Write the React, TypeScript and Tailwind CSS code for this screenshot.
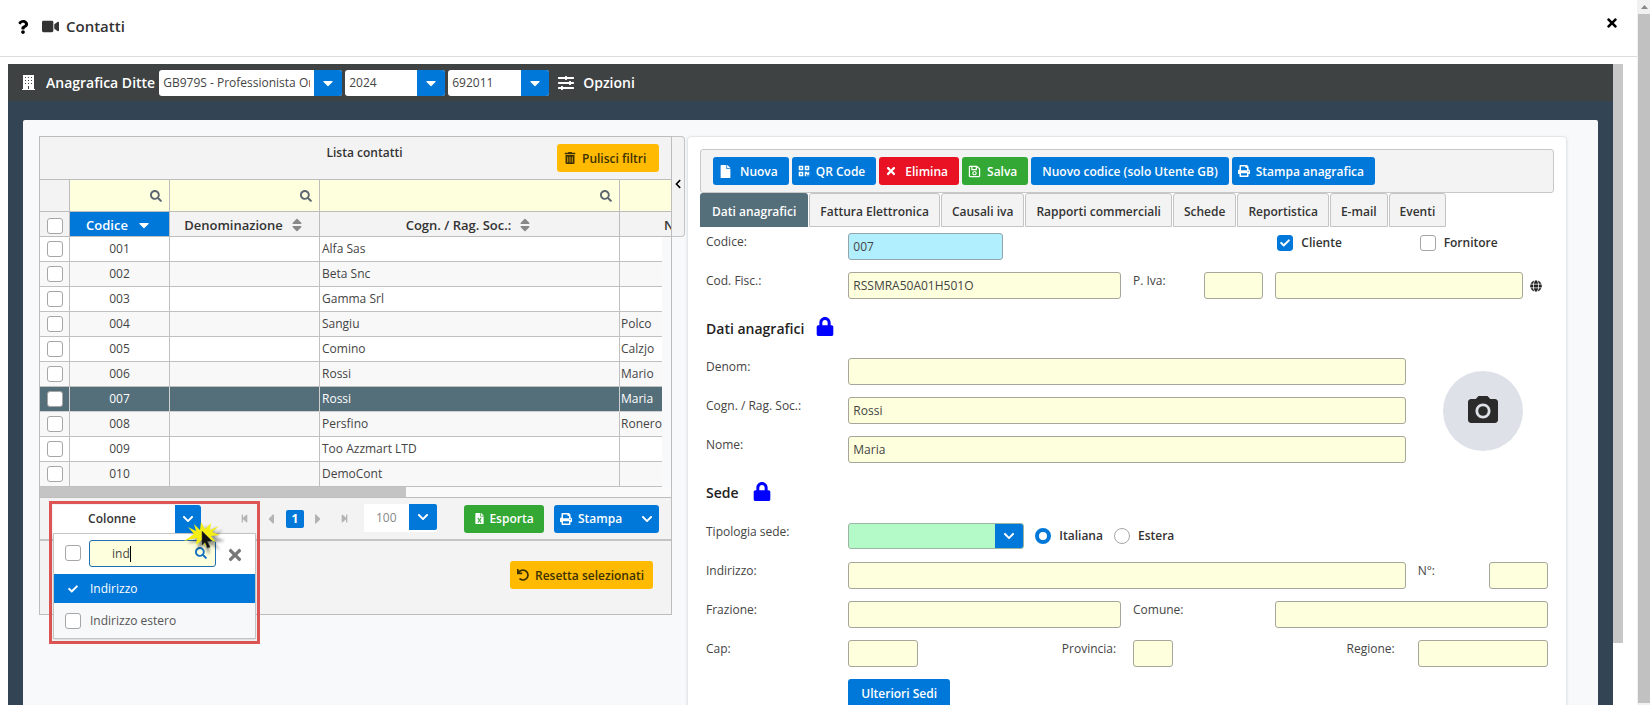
import React from "react";
import {
  FaCaretDown,
  FaCaretLeft,
  FaCaretRight,
  FaCheck,
  FaChevronDown,
  FaChevronLeft,
  FaFile,
  FaFileExcel,
  FaGlobe,
  FaLock,
  FaPrint,
  FaQrcode,
  FaQuestion,
  FaRegSave,
  FaSearch,
  FaSlidersH,
  FaSort,
  FaStepBackward,
  FaStepForward,
  FaTimes,
  FaTrashAlt,
  FaUndo,
  FaVideo,
} from "react-icons/fa";
import { MdCameraAlt } from "react-icons/md";

type Contact = { code: string; surname: string; name: string };

const contacts: Contact[] = [
  { code: "001", surname: "Alfa Sas", name: "" },
  { code: "002", surname: "Beta Snc", name: "" },
  { code: "003", surname: "Gamma Srl", name: "" },
  { code: "004", surname: "Sangiu", name: "Polco" },
  { code: "005", surname: "Comino", name: "Calzjo" },
  { code: "006", surname: "Rossi", name: "Mario" },
  { code: "007", surname: "Rossi", name: "Maria" },
  { code: "008", surname: "Persfino", name: "Ronero" },
  { code: "009", surname: "Too Azzmart LTD", name: "" },
  { code: "010", surname: "DemoCont", name: "" },
];

const selectedCode = "007";

const tabs = [
  "Dati anagrafici",
  "Fattura Elettronica",
  "Causali iva",
  "Rapporti commerciali",
  "Schede",
  "Reportistica",
  "E-mail",
  "Eventi",
];

function BuildingIcon() {
  return (
    <svg width="13" height="15" viewBox="0 0 13 15" fill="currentColor" aria-hidden="true">
      <path
        fillRule="evenodd"
        d="M1 0H12V14H13V15H0V14H1ZM3 2V3H4V2ZM6 2V3H7V2ZM9 2V3H10V2ZM3 5V6H4V5ZM6 5V6H7V5ZM9 5V6H10V5ZM3 8V9H4V8ZM6 8V9H7V8ZM9 8V9H10V8ZM6 11V14H7V11Z"
      />
    </svg>
  );
}

function CheckBox({ label, checked = false, className = "" }: { label: string; checked?: boolean; className?: string }) {
  return (
    <span className={`relative inline-flex size-4 shrink-0 ${className}`}>
      <input
        type="checkbox"
        aria-label={label}
        defaultChecked={checked}
        className="peer size-4 appearance-none rounded-[3px] border border-[#a6a6a6] bg-white checked:border-[#0078d9] checked:bg-[#0078d9]"
      />
      <FaCheck className="pointer-events-none absolute left-[3px] top-[3px] hidden size-[10px] text-white peer-checked:block" />
    </span>
  );
}

function TopSelect({ label, value, className }: { label: string; value: string; className: string }) {
  return (
    <div className={`relative h-[26px] overflow-hidden rounded-[3px] bg-white ${className}`}>
      <select
        aria-label={label}
        className="h-full w-full appearance-none bg-transparent pl-1 pr-8 text-xs text-[#444]"
      >
        <option>{value}</option>
      </select>
      <span className="pointer-events-none absolute inset-y-0 right-0 flex w-7 items-center justify-center bg-[#0078d9] text-white">
        <FaCaretDown className="size-4" />
      </span>
    </div>
  );
}

function ActionButton({
  children,
  icon,
  className,
}: {
  children: React.ReactNode;
  icon?: React.ReactNode;
  className: string;
}) {
  return (
    <button type="button" className={`flex h-7 items-center whitespace-nowrap rounded-[3px] text-xs font-semibold ${className}`}>
      {icon}
      <span className="pt-px">{children}</span>
    </button>
  );
}

function FieldLabel({ children, htmlFor, className = "" }: { children: React.ReactNode; htmlFor: string; className?: string }) {
  return (
    <label htmlFor={htmlFor} className={`whitespace-nowrap text-xs leading-[18px] text-[#444] ${className}`}>
      {children}
    </label>
  );
}

function TextField({ id, value = "", className = "", label }: { id: string; value?: string; className?: string; label?: string }) {
  return (
    <input
      id={id}
      type="text"
      aria-label={label}
      defaultValue={value}
      className={`h-[27px] min-w-0 rounded-[3px] border border-[#a6a69a] bg-[#feffdd] px-1 text-xs text-[#444] ${className}`}
    />
  );
}

function SectionTitle({ children, className }: { children: React.ReactNode; className: string }) {
  return (
    <div className={`flex items-center ${className}`}>
      <h2 className="text-sm font-semibold text-[#222]">{children}</h2>
      <FaLock className="mb-1 h-[19px] w-[18px] text-[#0000ff]" />
    </div>
  );
}

function ColumnMenu() {
  return (
    <div className="absolute left-[9px] top-[3px] z-10 w-[211px] border-[3px] border-[#dd5454] pb-[2px] pt-px">
      <div className="ml-px flex h-7 w-[148px]">
        <button type="button" aria-expanded="true" className="flex flex-1 bg-white text-xs font-semibold text-[#333]">
          <span className="flex h-full flex-1 items-center justify-center pr-1">Colonne</span>
          <span className="flex h-full w-[26px] items-center justify-center rounded-tr-[3px] bg-[#0078d9] text-white">
            <FaChevronDown className="size-3" />
          </span>
        </button>
      </div>
      <div className="mx-px border border-[#c4c4c4] bg-[#f6f8fa] pb-[3px] shadow">
        <div className="flex h-10 items-center bg-white pb-[2px] pl-[11px]">
          <CheckBox label="Seleziona tutte le colonne" />
          <div className="relative ml-2 w-[127px]">
            <input
              type="text"
              aria-label="Filtra colonne"
              defaultValue="ind"
              className="h-[27px] w-full rounded-[3px] border border-[#1f6fb5] bg-[#feffdd] pl-[22px] text-xs text-[#444]"
            />
            <span className="absolute left-[41px] top-[6px] h-4 w-px bg-black" />
            <FaSearch className="absolute right-[9px] top-[7px] size-3 text-[#1672c0]" />
          </div>
          <button type="button" aria-label="Chiudi" className="ml-[10px] mt-1 text-[#777]">
            <FaTimes className="size-[18px]" />
          </button>
        </div>
        <label className="flex h-[29px] items-center gap-[9px] bg-[#0078d9] pl-[11px] text-xs text-white">
          <CheckBox label="Indirizzo" checked />
          Indirizzo
        </label>
        <label className="mt-[3px] flex h-[29px] items-center gap-[9px] pl-[11px] text-xs text-[#555]">
          <CheckBox label="Indirizzo estero" />
          Indirizzo estero
        </label>
      </div>
      <svg className="pointer-events-none absolute left-[131px] top-[18px]" width="42" height="40" viewBox="0 0 42 40" aria-hidden="true">
        <defs>
          <filter id="soft" x="-20%" y="-20%" width="150%" height="150%">
            <feGaussianBlur stdDeviation="1.4" />
          </filter>
        </defs>
        <path
          d="M4 5L14 9L13 3L18 8L21 0L23 8L31 2L28 9L38 5L30 12L40 16L29 17L35 25L25 19L24 30L19 20L12 25L14 17L2 18L12 13Z"
          fill="#00000066"
          filter="url(#soft)"
          transform="translate(2 3)"
        />
        <path
          d="M5 5L13 9L11 2L17 8L18 0L22 7L28 1L27 8L36 4L29 10L37 13L28 14L33 20L25 17L23 25L19 18L13 23L14 16L1 19L11 12Z"
          fill="#f4ee12"
        />
        <path d="M19 9V23L22 20.500L24.500 26L27 25L24.500 19.500L29 19Z" fill="#111" stroke="#444" strokeWidth="0.500" />
      </svg>
    </div>
  );
}

function ContactList() {
  const th = "border-b border-[#bdbdbd] p-0";
  return (
    <section className="relative flex items-start">
      <div className="min-w-0 flex-1 border border-[#bdbdbd] bg-[#f3f3f3]">
        <div className="relative flex h-[43px] justify-center border-b border-[#bdbdbd]">
          <h1 className="pl-[18px] pt-[7px] text-xs leading-[18px] font-semibold text-[#333]">Lista contatti</h1>
          <ActionButton
            className="absolute right-3 top-[7px] w-[102px] gap-[6px] bg-[#ffba01] pl-[7px] text-[#3d3100]"
            icon={<FaTrashAlt className="size-3" />}
          >
            Pulisci filtri
          </ActionButton>
        </div>
        <table className="w-full table-fixed border-separate border-spacing-0 text-xs text-[#444]">
          <colgroup>
            <col className="w-[30px]" />
            <col className="w-[100px]" />
            <col className="w-[150px]" />
            <col className="w-[300px]" />
            <col />
            <col className="w-[9px]" />
          </colgroup>
          <thead>
            <tr className="h-8">
              <td className={`${th} border-r`} />
              {["Filtra codice", "Filtra denominazione", "Filtra cognome"].map((label) => (
                <td key={label} className={`${th} border-r bg-[#feffdd]`}>
                  <div className="flex items-center pr-[7px]">
                    <input type="text" aria-label={label} className="h-6 min-w-0 flex-1 bg-transparent px-1" />
                    <FaSearch className="size-3 shrink-0 text-[#5c6770]" />
                  </div>
                </td>
              ))}
              <td colSpan={2} className={`${th} bg-[#feffdd]`} />
            </tr>
            <tr className="h-[25px] text-[13px] leading-5 text-[#333]">
              <th className={`${th} border-r`}>
                <CheckBox label="Seleziona tutti" className="align-middle" />
              </th>
              <th className={`${th} border-r bg-[#0078d9] font-semibold text-white`}>
                <span className="flex items-center justify-center gap-2 pr-px pt-[2px]">
                  Codice <FaCaretDown className="size-4" />
                </span>
              </th>
              <th className={`${th} border-r font-semibold`}>
                <span className="flex items-center justify-center gap-[6px] pt-[2px]">
                  Denominazione <FaSort className="size-4 text-[#888]" />
                </span>
              </th>
              <th className={`${th} border-r font-semibold`}>
                <span className="flex items-center justify-center gap-[6px] pt-[2px]">
                  Cogn. / Rag. Soc.: <FaSort className="size-4 text-[#888]" />
                </span>
              </th>
              <th colSpan={2} className={`${th} overflow-hidden whitespace-nowrap pl-[44px] pt-[2px] text-left font-semibold`}>
                Nome
              </th>
            </tr>
          </thead>
          <tbody>
            {contacts.map((c, i) => {
              const tone =
                c.code === selectedCode
                  ? "border-[#d0d0d0] bg-[#546e7a] text-white"
                  : i % 2 === 0
                    ? "border-[#c0c0c0] bg-white"
                    : "border-[#c0c0c0] bg-[#f8f8f8]";
              return (
                <tr key={c.code} className="h-[25px]">
                  <td className={`border-b border-r p-0 text-center ${tone}`}>
                    <CheckBox label={`Seleziona ${c.code}`} className="align-middle" />
                  </td>
                  <td className={`border-b border-r p-0 text-center ${tone}`}>{c.code}</td>
                  <td className={`border-b border-r p-0 ${tone}`} />
                  <td className={`border-b border-r p-0 pl-[2px] ${tone}`}>{c.surname}</td>
                  <td className={`whitespace-nowrap border-b p-0 pl-px ${tone}`}>{c.name}</td>
                  <td className="bg-[#f7f9fb] p-0" />
                </tr>
              );
            })}
          </tbody>
        </table>
        <div className="flex h-[11px] border-b border-[#bdbdbd] bg-[#fafafa]">
          <div className="w-[58%] bg-[#c4c4c4]" />
        </div>
        <div className="relative flex h-[43px] items-center border-b-2 border-[#c4c4c4] pl-[200px] pr-3">
          <ColumnMenu />
          <nav aria-label="Pagine" className="flex items-center text-[#b3b3b3]">
            <button type="button" aria-label="Prima pagina">
              <FaStepBackward className="size-[9px]" />
            </button>
            <button type="button" aria-label="Pagina precedente" className="ml-[14px]">
              <FaCaretLeft className="size-4" />
            </button>
            <button type="button" className="ml-[7px] size-[18px] rounded-[2px] bg-[#0078d9] text-xs font-bold text-white">
              1
            </button>
            <button type="button" aria-label="Pagina successiva" className="ml-[6px]">
              <FaCaretRight className="size-4" />
            </button>
            <button type="button" aria-label="Ultima pagina" className="ml-[14px]">
              <FaStepForward className="size-[9px]" />
            </button>
          </nav>
          <div className="relative mb-[2px] ml-[15px] h-7 w-[73px] bg-white">
            <select aria-label="Righe per pagina" className="h-full w-full appearance-none bg-transparent pl-3 text-xs text-[#888]">
              <option>100</option>
            </select>
            <span className="pointer-events-none absolute right-0 top-0 flex h-[26px] w-7 items-center justify-center rounded-r-[2px] bg-[#0078d9] text-white">
              <FaChevronDown className="size-3" />
            </span>
          </div>
          <ActionButton
            className="ml-auto w-20 justify-center gap-1 bg-[#34a835] text-white"
            icon={<FaFileExcel className="size-[11px]" />}
          >
            Esporta
          </ActionButton>
          <button
            type="button"
            className="ml-[10px] flex h-7 w-[105px] items-center gap-[6px] rounded-[3px] bg-[#0078d9] px-[6px] text-xs font-semibold text-white"
          >
            <FaPrint className="size-3" />
            <span className="flex-1 pt-px text-left">Stampa</span>
            <FaChevronDown className="size-3" />
          </button>
        </div>
        <div className="flex h-[73px] justify-end pr-[18px] pt-5">
          <ActionButton className="w-[143px] gap-[6px] bg-[#ffba01] pl-[7px] text-[#3d3100]" icon={<FaUndo className="size-3" />}>
            Resetta selezionati
          </ActionButton>
        </div>
      </div>
      <button
        type="button"
        aria-label="Comprimi elenco"
        className="flex h-[101px] w-[13px] items-center justify-center rounded-r-[4px] border border-l-0 border-[#c4c4c4] bg-[#f3f3f3] pb-[6px] text-black"
      >
        <FaChevronLeft className="size-[10px]" />
      </button>
    </section>
  );
}

function ContactDetail() {
  const row = "grid h-[39px] grid-cols-12 gap-x-3 pt-[6px]";
  return (
    <section className="rounded-t-[4px] border border-[#e4e7ea] bg-white px-3 pt-3 shadow">
      <div className="flex h-11 items-center gap-[3px] rounded-[3px] border border-[#c8c8c8] bg-[#f3f3f3] pl-3">
        <ActionButton className="gap-2 bg-[#0078d9] pl-[6px] pr-[11px] text-white" icon={<FaFile className="size-[13px]" />}>
          Nuova
        </ActionButton>
        <ActionButton className="gap-[6px] bg-[#0078d9] pl-[6px] pr-[11px] text-white" icon={<FaQrcode className="size-3" />}>
          QR Code
        </ActionButton>
        <ActionButton className="gap-2 bg-[#e81224] pl-[6px] pr-[11px] text-white" icon={<FaTimes className="size-3" />}>
          Elimina
        </ActionButton>
        <ActionButton className="gap-[6px] bg-[#34a835] pl-[6px] pr-[11px] text-white" icon={<FaRegSave className="size-[13px]" />}>
          Salva
        </ActionButton>
        <ActionButton className="bg-[#0078d9] px-[11px] text-white">Nuovo codice (solo Utente GB)</ActionButton>
        <ActionButton className="gap-[6px] bg-[#0078d9] pl-[6px] pr-[11px] text-white" icon={<FaPrint className="size-3" />}>
          Stampa anagrafica
        </ActionButton>
      </div>
      <div role="tablist" className="flex h-[34px] gap-px">
        {tabs.map((t, i) => (
          <button
            key={t}
            type="button"
            role="tab"
            aria-selected={i === 0}
            className={
              i === 0
                ? "whitespace-nowrap rounded-t-[3px] bg-[#546e7a] px-3 pt-[3px] text-xs font-semibold text-white"
                : "whitespace-nowrap rounded-t-[3px] border border-[#c4c4c4] bg-[#f3f3f3] px-[10px] pt-[3px] text-xs font-semibold text-[#333]"
            }
          >
            {t}
          </button>
        ))}
      </div>
      <form className="px-[6px]">
        <div className={row}>
          <FieldLabel htmlFor="codice" className="col-span-2">Codice:</FieldLabel>
          <div className="col-span-6">
            <input
              id="codice"
              type="text"
              defaultValue="007"
              className="h-[27px] w-[155px] rounded-[3px] border border-[#93a5ab] bg-[#b2effe] px-1 text-xs text-[#444]"
            />
          </div>
          <label className="col-span-2 flex h-5 items-center gap-2 pl-[2px] text-xs font-semibold text-[#333]">
            <CheckBox label="Cliente" checked />
            Cliente
          </label>
          <label className="col-span-2 flex h-5 items-center gap-2 pl-[2px] text-xs font-semibold text-[#333]">
            <CheckBox label="Fornitore" />
            Fornitore
          </label>
        </div>
        <div className={row}>
          <FieldLabel htmlFor="fisc" className="col-span-2">Cod. Fisc.:</FieldLabel>
          <TextField id="fisc" value="RSSMRA50A01H501O" className="col-span-4" />
          <FieldLabel htmlFor="piva">P. Iva:</FieldLabel>
          <TextField id="piva" label="P. Iva paese" />
          <div className="col-span-4 flex h-[27px] items-center">
            <TextField id="piva-numero" label="Numero P. Iva" className="flex-1" />
            <FaGlobe className="ml-[7px] mr-[6px] size-3 text-[#222]" />
          </div>
        </div>
        <SectionTitle className="h-[47px] gap-3">Dati anagrafici</SectionTitle>
        <div className="grid grid-cols-12 gap-x-3">
          <div className="col-span-10">
            <div className="grid h-[39px] grid-cols-10 gap-x-3 pt-[6px]">
              <FieldLabel htmlFor="denom" className="col-span-2">Denom:</FieldLabel>
              <TextField id="denom" className="col-span-8" />
            </div>
            <div className="grid h-[39px] grid-cols-10 gap-x-3 pt-[6px]">
              <FieldLabel htmlFor="cognome" className="col-span-2">Cogn. / Rag. Soc.:</FieldLabel>
              <TextField id="cognome" value="Rossi" className="col-span-8" />
            </div>
            <div className="grid h-[39px] grid-cols-10 gap-x-3 pt-[6px]">
              <FieldLabel htmlFor="nome" className="col-span-2">Nome:</FieldLabel>
              <TextField id="nome" value="Maria" className="col-span-8" />
            </div>
          </div>
          <div className="col-span-2 flex items-center justify-center">
            <button
              type="button"
              aria-label="Carica foto"
              className="flex size-20 items-center justify-center rounded-full bg-[#dee2e8] text-[#2b2b2b]"
            >
              <MdCameraAlt className="size-9" />
            </button>
          </div>
        </div>
        <SectionTitle className="h-12 gap-[14px]">Sede</SectionTitle>
        <div className={row}>
          <FieldLabel htmlFor="tipologia" className="col-span-2">Tipologia sede:</FieldLabel>
          <div className="col-span-10 flex items-start">
            <div className="relative h-[26px] w-[176px] overflow-hidden rounded-[3px] border border-[#9bb5a2] bg-[#b4fac8]">
              <select id="tipologia" className="h-full w-full appearance-none bg-transparent px-1 text-xs">
                <option></option>
              </select>
              <span className="pointer-events-none absolute inset-y-0 right-0 flex w-7 items-center justify-center bg-[#0078d9] text-white">
                <FaChevronDown className="size-3" />
              </span>
            </div>
            <label className="ml-[11px] flex h-[26px] items-center gap-2 text-xs font-semibold text-[#333]">
              <input
                type="radio"
                name="paese"
                defaultChecked
                className="size-4 appearance-none rounded-full border border-[#a6a6a6] bg-white checked:border-4 checked:border-[#0078d9]"
              />
              Italiana
            </label>
            <label className="ml-[11px] flex h-[26px] items-center gap-2 text-xs font-semibold text-[#333]">
              <input
                type="radio"
                name="paese"
                className="size-4 appearance-none rounded-full border border-[#a6a6a6] bg-white checked:border-4 checked:border-[#0078d9]"
              />
              Estera
            </label>
          </div>
        </div>
        <div className={row}>
          <FieldLabel htmlFor="indirizzo" className="col-span-2">Indirizzo:</FieldLabel>
          <TextField id="indirizzo" className="col-span-8" />
          <FieldLabel htmlFor="numero">N°:</FieldLabel>
          <TextField id="numero" />
        </div>
        <div className={row}>
          <FieldLabel htmlFor="frazione" className="col-span-2">Frazione:</FieldLabel>
          <TextField id="frazione" className="col-span-4" />
          <FieldLabel htmlFor="comune" className="col-span-2">Comune:</FieldLabel>
          <TextField id="comune" className="col-span-4" />
        </div>
        <div className={row}>
          <FieldLabel htmlFor="cap" className="col-span-2">Cap:</FieldLabel>
          <div className="col-span-3">
            <TextField id="cap" className="w-[70px]" />
          </div>
          <FieldLabel htmlFor="provincia">Provincia:</FieldLabel>
          <div className="col-span-3">
            <TextField id="provincia" className="w-10" />
          </div>
          <FieldLabel htmlFor="regione">Regione:</FieldLabel>
          <TextField id="regione" className="col-span-2" />
        </div>
        <div className={row}>
          <div className="col-span-3 col-start-3">
            <ActionButton className="bg-[#0078d9] px-[13px] text-white">Ulteriori Sedi</ActionButton>
          </div>
        </div>
      </form>
    </section>
  );
}

export default function App() {
  return (
    <div className="flex h-screen overflow-hidden bg-white font-['Open_Sans','Noto_Sans',sans-serif]">
      <div className="flex min-w-0 flex-1 flex-col">
        <header className="flex h-[57px] shrink-0 items-center border-b border-[#dcdcdc] pb-[3px] pl-4 pr-[18px]">
          <FaQuestion className="size-[14px] text-black" />
          <FaVideo className="ml-3 size-[17px] text-[#333]" />
          <span className="ml-[7px] text-[15px] font-semibold text-[#333]">Contatti</span>
          <button type="button" aria-label="Chiudi finestra" className="mb-2 ml-auto text-black">
            <FaTimes className="size-[14px]" />
          </button>
        </header>
        <div className="flex min-h-0 flex-1 pl-2 pr-[14px] pt-[7px]">
          <div className="min-w-0 flex-1 bg-[#334555]">
            <div className="flex h-[37px] items-center bg-[#3e4243] pl-[14px] text-sm font-semibold text-white">
              <BuildingIcon />
              <span className="ml-[11px]">Anagrafica Ditte</span>
              <TopSelect label="Ditta" value="GB979S - Professionista Ordinario" className="ml-1 w-[183px] font-normal" />
              <TopSelect label="Anno" value="2024" className="ml-[3px] w-[100px] font-normal" />
              <TopSelect label="Attività" value="692011" className="ml-[3px] w-[101px] font-normal" />
              <button type="button" className="ml-[9px] flex items-center gap-[9px]">
                <FaSlidersH className="size-4" />
                Opzioni
              </button>
            </div>
            <main className="mx-[15px] mt-[19px] grid h-full grid-cols-[646px_1fr] gap-x-[2px] rounded-t-[2px] bg-[#f8f9fb] pl-4 pr-[31px] pt-4">
              <ContactList />
              <ContactDetail />
            </main>
          </div>
          <div className="h-[579px] w-[10px] bg-[#c7c7c7]" />
        </div>
      </div>
      <div className="flex w-[13px] flex-col bg-[#f1f1f1] pb-[2px] pl-px">
        <span className="flex h-[14px] items-center justify-center text-[#888]">
          <svg width="7" height="4" viewBox="0 0 7 4" aria-hidden="true">
            <path d="M0 4L3.500 0L7 4Z" fill="currentColor" />
          </svg>
        </span>
        <span className="flex-1 bg-[#c1c1c1]" />
      </div>
    </div>
  );
}
